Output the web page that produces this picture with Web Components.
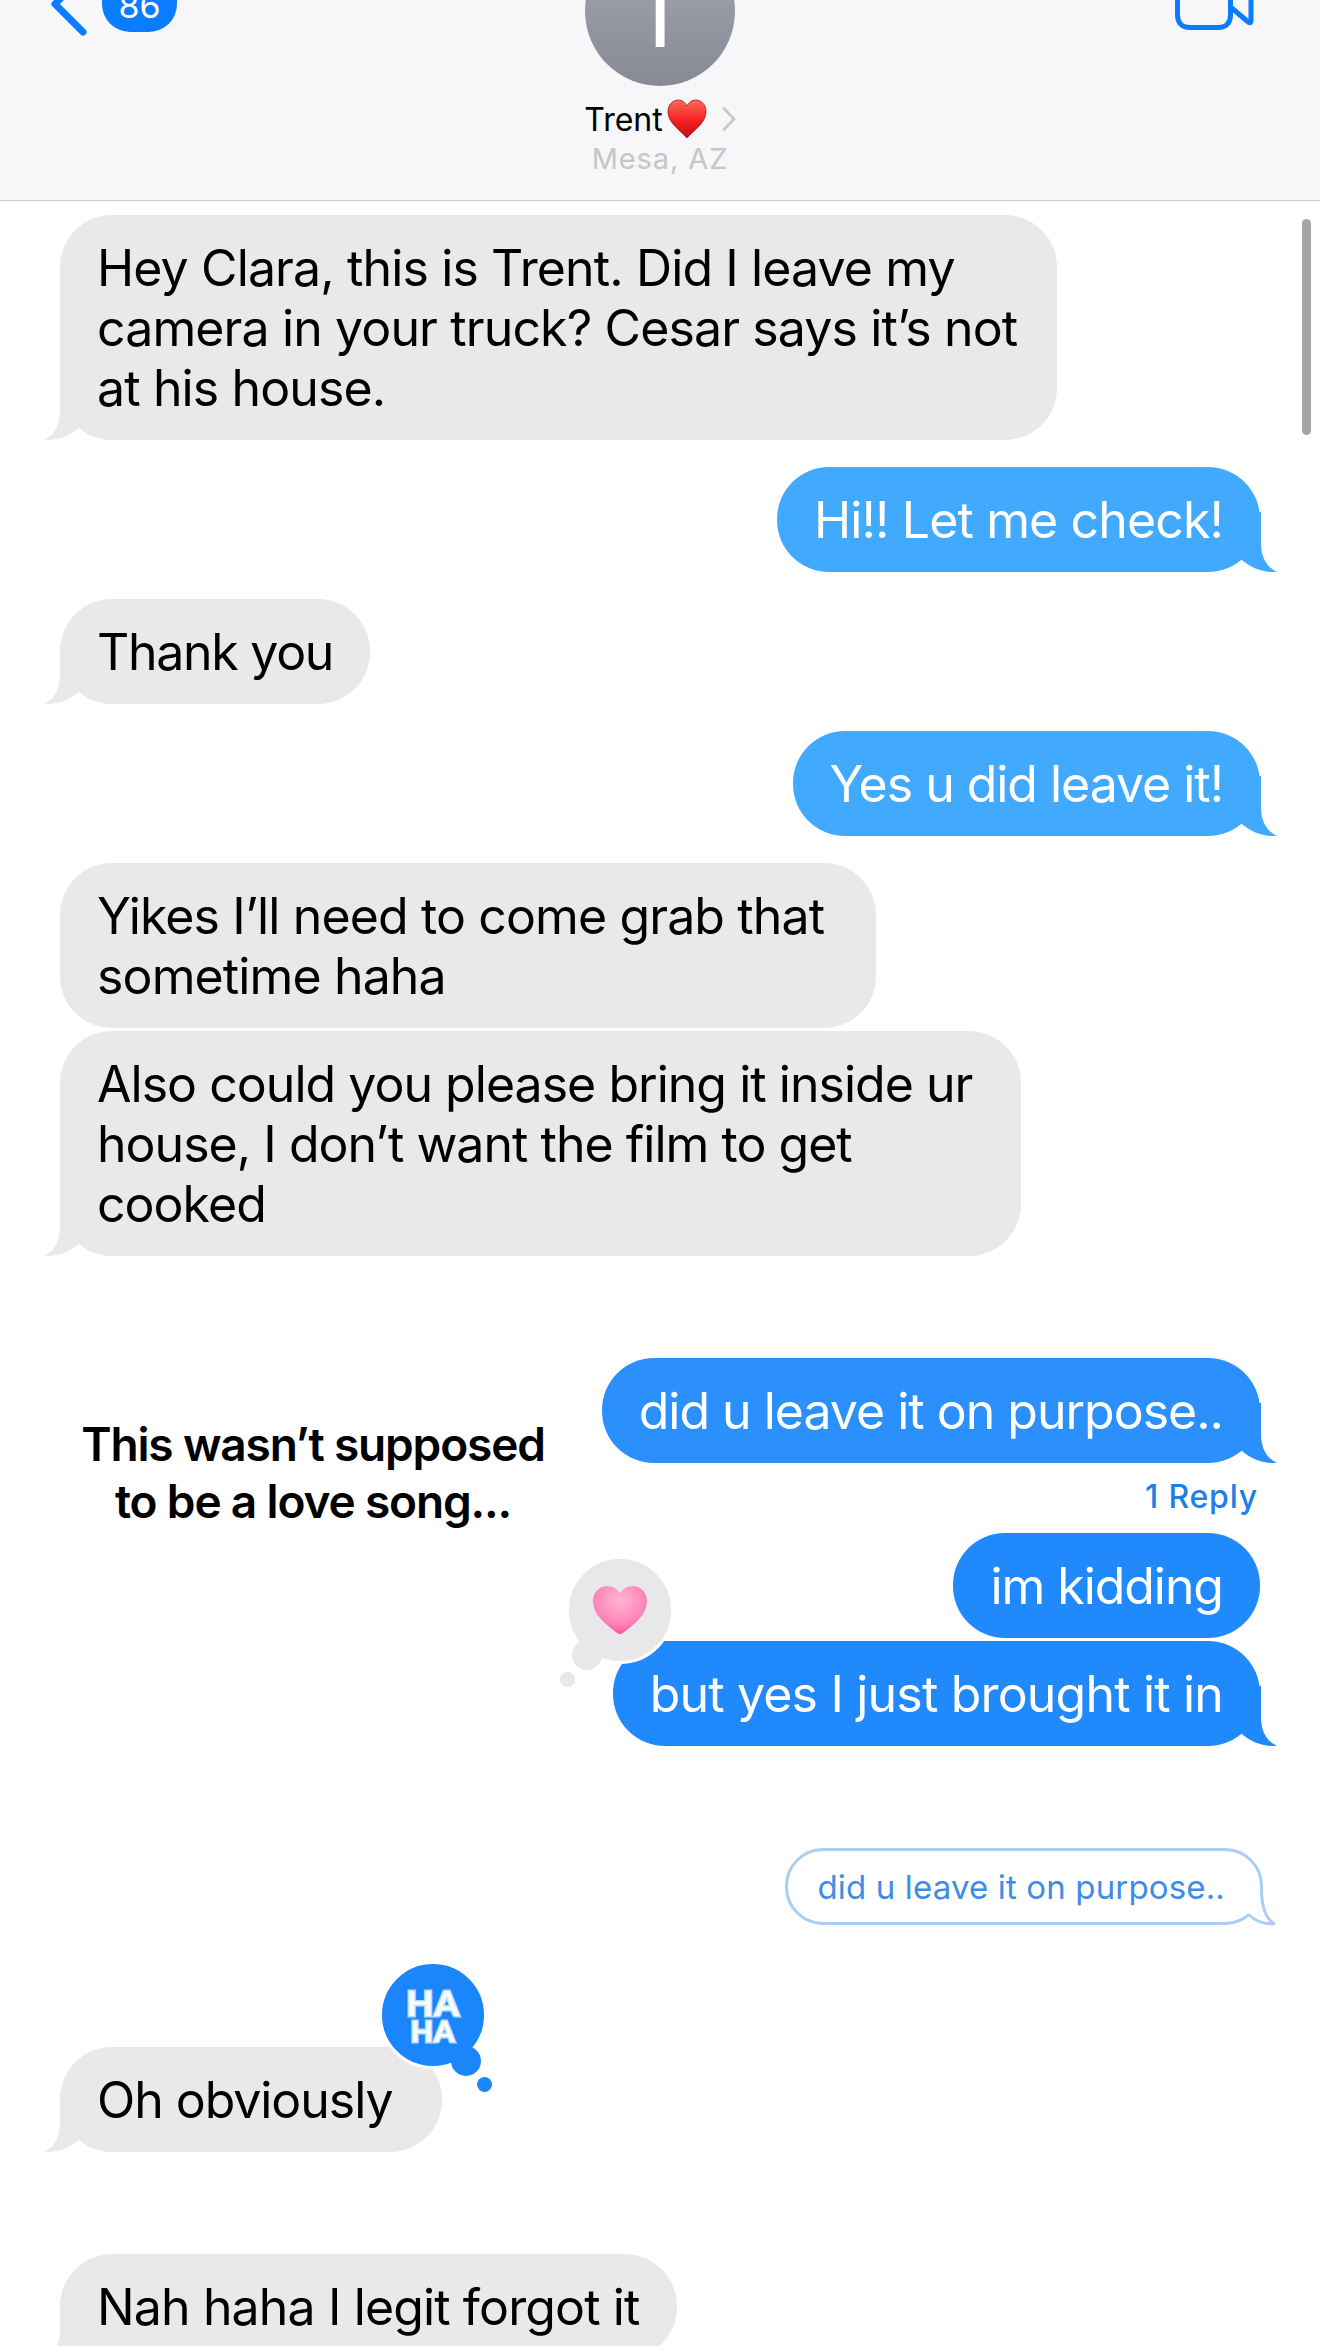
<!DOCTYPE html>
<html>
<head>
<meta charset="utf-8">
<title>Messages</title>
<style>
  html, body { margin: 0; height: 2346px; overflow: hidden; background: #fff; }
  body { font-family: Inter, "Liberation Sans", sans-serif; }
</style>
</head>
<body>
<messages-screen>
  <chat-header name="Trent" place="Mesa, AZ" unread="86"></chat-header>
  <chat-thread>
    <msg-bubble from="them" style="padding-right:40px">Hey Clara, this is Trent. Did I leave my<br>camera in your truck? Cesar says it’s not<br>at his house.</msg-bubble>
    <msg-bubble from="me" tone="light" gap="27">Hi!! Let me check!</msg-bubble>
    <msg-bubble from="them" gap="27" style="letter-spacing:-1.28px">Thank you</msg-bubble>
    <msg-bubble from="me" tone="light" gap="27" style="letter-spacing:-1.03px">Yes u did leave it!</msg-bubble>
    <msg-bubble from="them" gap="27" notail style="padding-right:52px">Yikes I’ll need to come grab that<br>sometime haha</msg-bubble>
    <msg-bubble from="them" gap="3" style="letter-spacing:-.97px;padding-right:49px">Also could you please bring it inside ur<br>house, I don’t want the film to get<br>cooked</msg-bubble>
    <msg-bubble from="me" tone="mid" gap="102" style="letter-spacing:-1px">did u leave it on purpose..</msg-bubble>
    <reply-count>1 Reply</reply-count>
    <msg-bubble from="me" tone="deep" gap="18" notail style="letter-spacing:-1.05px">im kidding</msg-bubble>
    <msg-bubble from="me" tone="deep" gap="3" style="letter-spacing:-.82px">but yes I just brought it in<tap-back slot="over" kind="heart"></tap-back></msg-bubble>
    <quote-bubble>did u leave it on purpose..</quote-bubble>
    <msg-bubble from="them" gap="122" style="letter-spacing:-1.05px;padding-right:50px">Oh obviously<tap-back slot="over" kind="haha"></tap-back></msg-bubble>
    <msg-bubble from="them" gap="102">Nah haha I legit forgot it</msg-bubble>
  </chat-thread>
  <song-caption>This wasn’t supposed<br>to be a love song...</song-caption>
  <scroll-thumb></scroll-thumb>
</messages-screen>

<script>
const TAIL = `<svg class="tail" viewBox="0 0 70 60" width="70" height="60"><path d="M15 0V30C15 44 11 54 -1 60C12 60.500 24 57 34 48L60 30V0Z"/></svg>`;

customElements.define("messages-screen", class extends HTMLElement {
  constructor() {
    super();
    this.attachShadow({ mode: "open" }).innerHTML = `
      <style>
        :host { display: block; position: relative; width: 1320px; height: 2346px; overflow: hidden; background: #fff; }
      </style>
      <slot></slot>`;
  }
});

customElements.define("chat-header", class extends HTMLElement {
  constructor() {
    super();
    const name = this.getAttribute("name");
    const place = this.getAttribute("place");
    const unread = this.getAttribute("unread");
    this.attachShadow({ mode: "open" }).innerHTML = `
      <style>
        :host { display: flex; height: 200px; border-bottom: 1px solid #c9c9cb; background: #f7f7f9; justify-content: space-between; align-items: flex-start; overflow: hidden; }
        .back { width: 330px; display: flex; align-items: flex-start; gap: 12px; height: 40px; padding-left: 50px; box-sizing: border-box; }
        .back svg { display: block; flex: none; }
        .count { height: 32px; width: 75px; background: #0a7cff; border-radius: 0 0 28px 28px; color: #fff; font-size: 34px; text-align: center; overflow: hidden; }
        .count span { display: block; margin-top: -14px; line-height: 40px; }
        .who { display: flex; flex-direction: column; align-items: center; width: 300px; }
        .avatar { width: 150px; height: 150px; margin-top: -64px; border-radius: 50%; background: linear-gradient(#a6a9b2, #878a94); color: #fff; overflow: hidden; text-align: center; font-size: 94px; line-height: 94px; font-weight: 400; padding-top: 30px; box-sizing: border-box; }
        .name { display: flex; align-items: center; height: 44px; margin-top: 11px; font-size: 32px; color: #000; }
        .name svg { display: block; flex: none; }
        .place { margin-top: 1px; font-size: 29px; line-height: 34px; letter-spacing: 0.9px; color: #c5c6c8; }
        .right { width: 330px; display: flex; justify-content: flex-end; padding-right: 65px; box-sizing: border-box; }
        .right svg { display: block; }
      </style>
      <div class="back">
        <svg width="40" height="40" viewBox="0 0 40 40"><path d="M33 -24L5 4L33 32" fill="none" stroke="#0a7cff" stroke-width="7" stroke-linecap="round" stroke-linejoin="round"/></svg>
        <div class="count"><span>${unread}</span></div>
      </div>
      <div class="who">
        <div class="avatar">T</div>
        <div class="name">${name}<svg style="margin-left:4px" width="40" height="40" viewBox="0 0 40 40"><defs><linearGradient id="r" x1="0" y1="0" x2="0" y2="1"><stop offset="0" stop-color="#ff6a58"/><stop offset=".55" stop-color="#f0201f"/><stop offset="1" stop-color="#c90c10"/></linearGradient></defs><path d="M20 39C13 31 1 24 1 12.500C1 5.500 6 1 11.500 1C15 1 18 3 20 7C22 3 25 1 28.500 1C34 1 39 5.500 39 12.500C39 24 27 31 20 39Z" fill="url(#r)" stroke="#9f1212" stroke-width=".8"/></svg><svg style="margin-left:15px" width="14" height="24" viewBox="0 0 14 24"><path d="M2 1.500L12 12L2 22.500" fill="none" stroke="#c9c9cc" stroke-width="2.800" stroke-linecap="round" stroke-linejoin="round"/></svg></div>
        <div class="place">${place}</div>
      </div>
      <div class="right">
        <svg width="80" height="32" viewBox="0 0 80 32"><path d="M2.500 -14V15C2.500 23 7 27.500 15 27.500H43C51 27.500 55.500 23 55.500 15V-14M55.500 7L72 21C75 24 76 23 76 20V-14" fill="none" stroke="#0a7cff" stroke-width="5" stroke-linejoin="round" stroke-linecap="round"/></svg>
      </div>`;
  }
});

customElements.define("chat-thread", class extends HTMLElement {
  constructor() {
    super();
    this.attachShadow({ mode: "open" }).innerHTML = `
      <style>
        :host { display: flex; flex-direction: column; padding: 14px 60px 0; }
      </style>
      <slot></slot>`;
  }
});

customElements.define("msg-bubble", class extends HTMLElement {
  constructor() {
    super();
    const tail = this.hasAttribute("notail") ? "" : TAIL;
    this.attachShadow({ mode: "open" }).innerHTML = `
      <style>
        :host { display: block; position: relative; align-self: flex-start; box-sizing: border-box; padding: 23px 37px 22px; border-radius: 52px; background: #e9e9eb; color: #000; font-size: 50px; line-height: 60px; white-space: nowrap; letter-spacing: -0.87px; fill: #e9e9eb; margin-top: var(--gap, 0); }
        :host([from="me"]) { align-self: flex-end; color: #fff; }
        :host([tone="light"]) { background: #41aaff; fill: #41aaff; }
        :host([tone="mid"]) { background: #2b90fc; fill: #2b90fc; }
        :host([tone="deep"]) { background: #2089fb; fill: #2089fb; }
        .tail { position: absolute; left: -15px; bottom: 0; overflow: visible; }
        :host([from="me"]) .tail { left: auto; right: -16px; transform: scaleX(-1); }
        .text { position: relative; }
      </style>
      ${tail}<span class="text"><slot></slot></span><slot name="over"></slot>`;
    if (this.hasAttribute("gap")) this.style.setProperty("--gap", this.getAttribute("gap") + "px");
  }
});

customElements.define("reply-count", class extends HTMLElement {
  constructor() {
    super();
    this.attachShadow({ mode: "open" }).innerHTML = `
      <style>
        :host { display: block; align-self: flex-end; margin-top: 16px; margin-right: 2px; font-size: 32px; line-height: 36px; font-weight: 500; letter-spacing: 0.8px; color: #1f7fe8; }
      </style>
      <slot></slot>`;
  }
});

customElements.define("quote-bubble", class extends HTMLElement {
  constructor() {
    super();
    this.attachShadow({ mode: "open" }).innerHTML = `
      <style>
        :host { display: block; position: relative; align-self: flex-end; box-sizing: border-box; margin: 102px -3px 0 0; height: 77px; padding: 0 35px 0 29px; border: 3px solid #a9cdf5; border-radius: 38px; color: #3d8de6; font-size: 33px; line-height: 72px; letter-spacing: 0.15px; white-space: nowrap; }
        svg { position: absolute; right: -20px; bottom: -8px; display: block; }
      </style>
      <slot></slot>
      <svg width="40" height="50" viewBox="0 0 40 50"><path d="M18 5L21.500 10C21.500 25 25 38 34 43.500C25 44.500 15 41 8 34L6 31Z" fill="#fff"/><path d="M21.500 8C21.500 25 25 38 34 43.500C25 44.500 15 41 8 34" fill="none" stroke="#a9cdf5" stroke-width="3" stroke-linejoin="round"/></svg>`;
  }
});

customElements.define("tap-back", class extends HTMLElement {
  constructor() {
    super();
    const haha = this.getAttribute("kind") === "haha";
    this.attachShadow({ mode: "open" }).innerHTML = `
      <style>
        :host { display: block; position: absolute; width: 108px; height: 108px; border-radius: 50%; box-sizing: border-box; border: 3px solid #fff; background: #e8e8ea; color: #e8e8ea; letter-spacing: 0; }
        :host([kind="heart"]) { left: -47px; top: -85px; }
        :host([kind="haha"]) { left: 319px; top: -86px; background: #1b86fb; color: #1b86fb; }
        .puff { position: absolute; width: 30px; height: 30px; left: 3px; top: 81px; border-radius: 50%; background: currentColor; }
        .dot { position: absolute; width: 15px; height: 15px; left: -9px; top: 113px; border-radius: 50%; background: currentColor; }
        :host([kind="haha"]) .puff { left: 69px; top: 82px; }
        :host([kind="haha"]) .dot { left: 95px; top: 113px; }
        .glyph { position: absolute; inset: 0; display: flex; flex-direction: column; align-items: center; justify-content: center; }
        .ha { font-family: Lato, Inter, sans-serif; color: #f6fbff; -webkit-text-stroke: 3px #b5daff; paint-order: stroke fill; text-align: center; }
        .ha b { display: block; font-weight: 900; font-size: 35px; line-height: 31px; letter-spacing: 1px; }
        .ha b + b { font-size: 29px; line-height: 25px; }
        svg { display: block; }
      </style>
      <div class="puff"></div><div class="dot"></div>
      <div class="glyph">${haha
        ? `<div class="ha"><b>HA</b><b>HA</b></div>`
        : `<svg width="56" height="50" viewBox="0 0 56 50"><defs><radialGradient id="p" cx=".5" cy=".3" r=".75"><stop offset="0" stop-color="#ffb6d3"/><stop offset=".65" stop-color="#ff84b8"/><stop offset="1" stop-color="#f4479a"/></radialGradient></defs><path d="M28 49C26 49 24 47 20 44C10 36 1 28 1 16C1 7 8 1 15 1C21 1 25 4 28 8C31 4 35 1 41 1C48 1 55 7 55 16C55 28 46 36 36 44C32 47 30 49 28 49Z" fill="url(#p)"/></svg>`}</div>`;
  }
});

customElements.define("song-caption", class extends HTMLElement {
  constructor() {
    super();
    this.attachShadow({ mode: "open" }).innerHTML = `
      <style>
        :host { display: block; position: absolute; left: 60px; width: 506px; top: 1416px; text-align: center; font-size: 46px; line-height: 57px; font-weight: 600; color: #000; letter-spacing: -1.15px; white-space: nowrap; }
      </style>
      <slot></slot>`;
  }
});

customElements.define("scroll-thumb", class extends HTMLElement {
  constructor() {
    super();
    this.attachShadow({ mode: "open" }).innerHTML = `
      <style>
        :host { display: block; position: absolute; left: 1302px; top: 219px; width: 9px; height: 216px; border-radius: 5px; background: #a5a5a5; }
      </style>`;
  }
});
</script>
</body>
</html>
